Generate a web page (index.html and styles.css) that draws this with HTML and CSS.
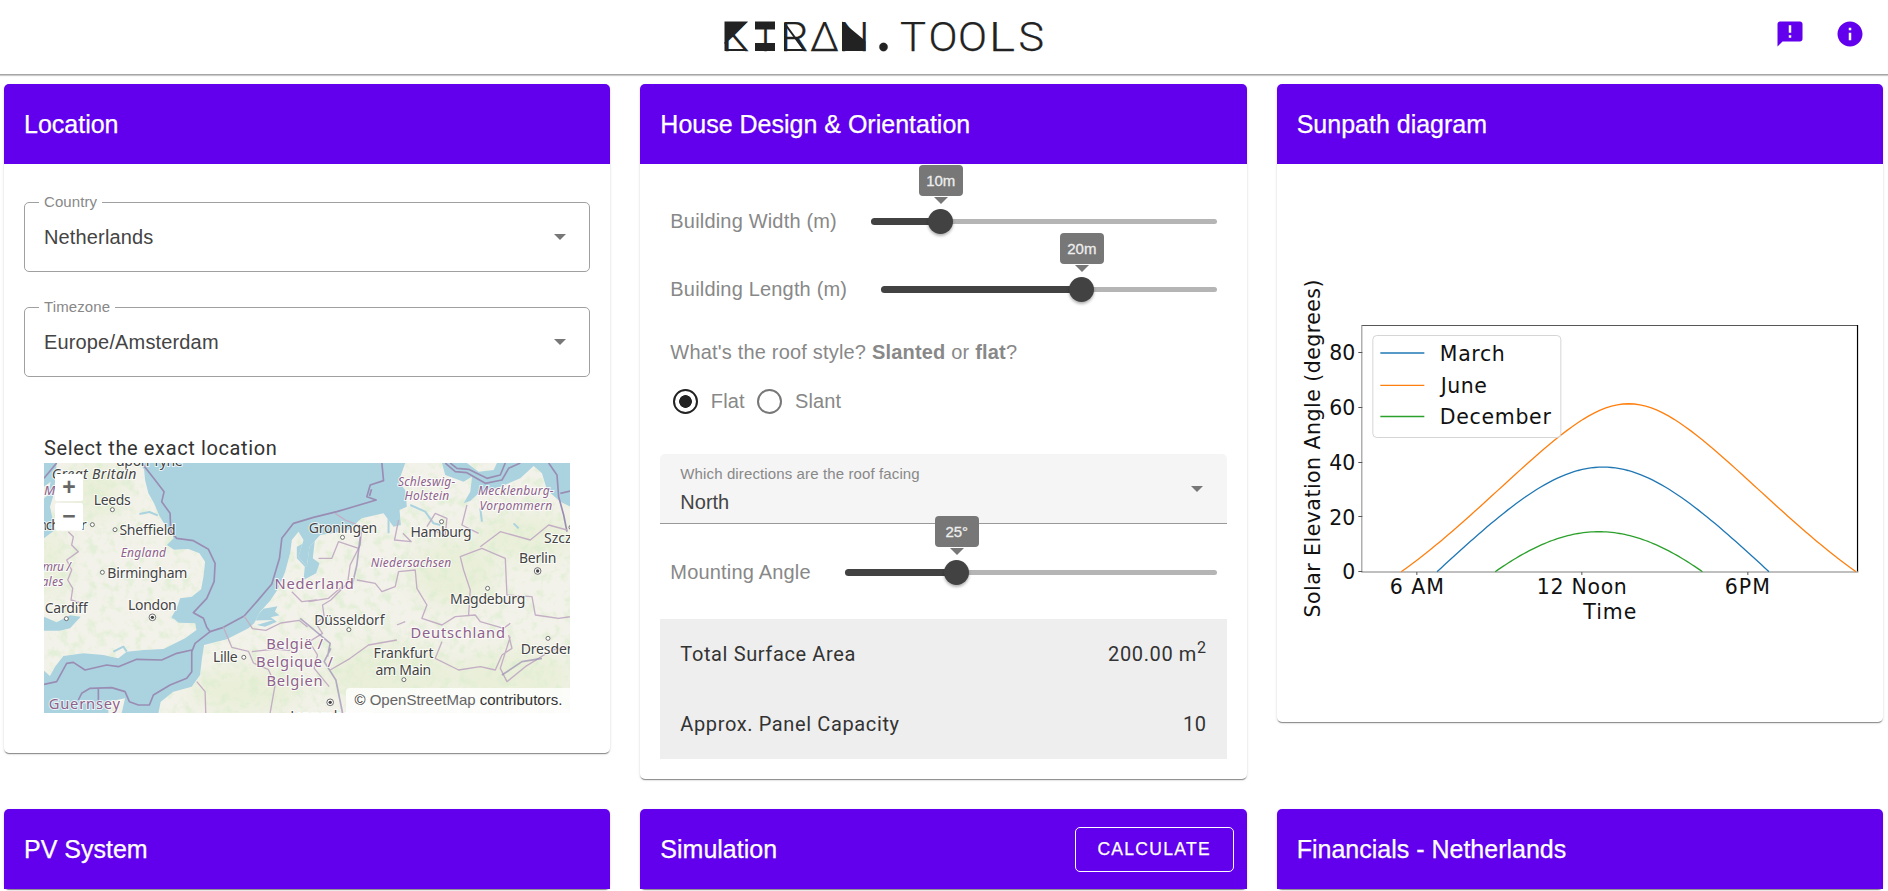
FILE: index.html
```html
<!DOCTYPE html>
<html lang="en">
<head>
<meta charset="utf-8">
<title>Kiran.Tools</title>
<link rel="stylesheet" href="styles.css">
</head>
<body>
<header class="topbar">
  <svg class="logo" viewBox="720 14 330 44" aria-label="KIRAN.TOOLS">
    <g class="logo-text">
      <text x="722" y="50.5" textLength="27" lengthAdjust="spacingAndGlyphs">K</text>
      <text x="760" y="50.5">I</text>
      <text x="780.500" y="50.5" textLength="28" lengthAdjust="spacingAndGlyphs">R</text>
      <text x="810" y="50.5" textLength="29" lengthAdjust="spacingAndGlyphs">Δ</text>
      <text x="838.5" y="50.5" textLength="31" lengthAdjust="spacingAndGlyphs">N</text>
      <circle cx="883.5" cy="47" r="4.2"/>
      <text x="900" y="50.5" textLength="26" lengthAdjust="spacingAndGlyphs">T</text>
      <text x="928.5" y="50.5" textLength="29" lengthAdjust="spacingAndGlyphs">O</text>
      <text x="958" y="50.5" textLength="29" lengthAdjust="spacingAndGlyphs">O</text>
      <text x="989" y="50.5" textLength="26" lengthAdjust="spacingAndGlyphs">L</text>
      <text x="1018.500" y="50.5" textLength="25.500" lengthAdjust="spacingAndGlyphs">S</text>
    </g>
    <path d="M724.5 21.5H748L724.5 44ZM755 21.5h20v8h-20ZM755 43h20v8h-20ZM842 21.5L865.5 41V51H842Z"/>
    <path class="logo-line" d="M725.5 42V50H746M785 23V50H804L785 24"/>
  </svg>
  <nav class="actions">
    <svg viewBox="0 0 24 24"><path d="M20 2H4c-1.100 0-1.990.9-1.990 2L2 22l4-4h14c1.100 0 2-.9 2-2V4c0-1.100-.9-2-2-2zm-7 9h-2V5h2v6zm0 4h-2v-2h2v2z"/></svg>
    <svg viewBox="0 0 24 24"><path d="M12 2C6.480 2 2 6.480 2 12s4.480 10 10 10 10-4.480 10-10S17.520 2 12 2zm1 15h-2v-6h2v6zm0-8h-2V7h2v2z"/></svg>
  </nav>
</header>
<main class="grid">
  <section class="card">
    <h2 class="card-head">Location</h2>
    <div class="location">
      <div class="outlined"><span class="notch">Country</span><span>Netherlands</span><i class="caret"></i></div>
      <div class="outlined"><span class="notch">Timezone</span><span>Europe/Amsterdam</span><i class="caret"></i></div>
      <div class="map-block">
        <p class="map-title">Select the exact location</p>
        <div class="map">
          <svg class="map-art" viewBox="42 99 1578 750" preserveAspectRatio="none">
            <defs>
              <clipPath id="land">
                <path d="M80 99H325L342 118 345 150 355 190 372 220 388 258 405 285 424 303 430 325 410 345 432 359 475 357 508 370 525 395 520 440 513 478 485 500 450 505 440 535 425 560 445 578 495 580 499 600 465 625 400 657 340 660 290 665 265 685 220 675 160 670 100 678 75 710 60 738 42 722V602L90 602 120 595 152 560 120 556 80 577 42 560V325L75 300 60 230 72 190Z"/>
                <path d="M385 849L392 815 430 785 485 770 510 735 515 690 522 645 590 628 655 595 672 580 690 545 720 512 745 475 765 425 780 370 785 330 805 305 820 330 805 380 830 410 838 350 870 315 950 303 995 265 1060 250 1090 290 1112 285 1108 240 1130 230 1125 180 1105 155 1125 99H1235L1245 135 1300 155 1325 140 1320 185 1300 220 1320 213 1350 185 1400 175 1470 145 1510 108 1535 130 1550 180 1590 215 1620 230V849Z"/>
                <path d="M1310 99L1345 125 1390 120 1400 99ZM235 815l50-10-10 44h-40zM42 170l20-15-8 40-12 10z"/>
              </clipPath>
              <filter id="grain" x="0" y="0" width="100%" height="100%">
                <feTurbulence type="fractalNoise" baseFrequency=".035" numOctaves="4" seed="8"/>
                <feColorMatrix values="0 0 0 0 .71  0 0 0 0 .85  0 0 0 0 .62  0 4 0 0 -1.95"/>
              </filter>
              <filter id="soft"><feGaussianBlur stdDeviation="28"/></filter>
            </defs>
            <rect x="42" y="99" width="1578" height="750" fill="#aad3df"/>
            <g clip-path="url(#land)">
              <rect x="42" y="99" width="1578" height="750" fill="#f3f2ea"/>
              <g filter="url(#soft)" fill="#e0ecc8" opacity=".5">
                <ellipse cx="200" cy="180" rx="80" ry="90"/><ellipse cx="60" cy="400" rx="50" ry="100"/>
                <ellipse cx="650" cy="780" rx="170" ry="70"/><ellipse cx="1080" cy="730" rx="200" ry="90"/>
                <ellipse cx="1270" cy="430" rx="130" ry="100"/><ellipse cx="1490" cy="320" rx="150" ry="70"/><ellipse cx="1450" cy="740" rx="180" ry="80"/>
              </g>
              <rect x="42" y="99" width="1578" height="750" filter="url(#grain)" opacity=".6"/>
              <path fill="#aad3df" d="M800 350L855 322 848 385 868 400 858 430 820 450 824 410 800 385ZM665 572L700 536 742 529 734 545 748 556 722 562 740 575 705 590 680 585 730 570Z"/>
              <path class="river" d="M328 252l30-6 25 10M425 562l30 8 35-2M250 665l30-15 10 15M1140 225l45 20 25 35 20 5M1450 280l15 15M1350 235l5 40M1075 260v50"/>
            </g>
            <g class="border-sea">
              <path d="M335 99L375 150 402 185 395 215 420 250 422 305 440 325 490 332 535 358 555 400 552 455 530 505 490 548 520 565 530 592 540 605 580 592 642 558 680 515 725 462 748 385 755 325 790 280 850 262 920 245 1038 210 1010 200 1020 165 1060 152 1055 99"/>
              <path d="M42 763L80 755 110 700 130 697 165 720 230 705 265 710 320 688 395 690 440 670 485 660 485 725 470 745 420 765 370 795 358 825 325 825 298 815 285 785 245 773 180 775 155 790 145 810M205 775v40M485 665L495 640 540 605M42 145L80 99M1018 198l6-20"/>
              <path d="M1245 99L1275 125 1310 128 1365 160 1415 150 1435 115 1470 99M1260 99L1280 115 1315 118 1370 145 1410 135 1425 99M1555 99L1580 135 1585 200 1600 255 1610 305M1590 190L1620 183"/>
            </g>
            <g class="border">
              <path d="M115 305l15 15-5 25 20 20-35 25 15 30-12 30 15 25-5 35 35 10M915 250l30 20 50 20-5 55-30 60-8 55-50 50-25 15 5 35-25 20 20 30-40 25 25 40-10 40 45 55M580 592l25 60 50 12 15 35 45 20 20 45-15 85M642 558l25 38 40 5 45-22 55-8 25 20M665 665l70-8 50 5M500 755l25 30 2 64M785 485l30 30 45-5M900 720l60-35 55-40 85-15"/>
              <path d="M835 515l60-10 40-35M865 385l40 0 20-50 60 20M1105 270l-12 60 50 5-25-25M980 450l55 10 20 25 40-15 10-45 50-5 5 55 30 50-15 40 60 20 40-25 60-5 15 20 70 20 20-15M1315 555l5-75-20-60-10-40 65-25 70 30 5 110 75 5 10 55 70 10 105-15M1350 350l60-45 90 25 55-45 55 15M1310 225l-15 60 50 25M1235 635l-20 50 70 35 65-10 45 10 20-45 30-20-10-40M1440 620l-30 95 20 40 55-45 80-50 55-10M1100 585l25-10M1190 290l25-40 35 15-5 50-40-15"/>
            </g>
            <path class="border-sea" opacity=".7" d="M965 470l15-65 10-85M810 565l30 25 60 50-8 40M902 655l-20 40 35 55 20 99M1415 735l60-40 60-10"/>
            <g class="label">
              <text x="258" y="107" textLength="200">upon Tyne</text>
              <text class="it" x="65" y="147" textLength="254">Great Britain</text>
              <text x="191" y="225" textLength="111">Leeds</text>
              <text x="-28" y="299" textLength="198">Manchester</text>
              <text x="268" y="315" textLength="169">Sheffield</text>
              <text x="232" y="443" textLength="240">Birmingham</text>
              <text x="294" y="539" textLength="146">London</text>
              <text x="44" y="550" textLength="129">Cardiff</text>
              <text x="549" y="696" textLength="74">Lille</text>
              <text x="836" y="308" textLength="205">Groningen</text>
              <text x="1141" y="322" textLength="183">Hamburg</text>
              <text x="1466" y="400" textLength="112">Berlin</text>
              <text x="1541" y="339">Szczecin</text>
              <text x="1259" y="523" textLength="226">Magdeburg</text>
              <text x="852" y="586" textLength="211">Düsseldorf</text>
              <text x="1030" y="685" textLength="180">Frankfurt</text>
              <text x="1036" y="736" textLength="167">am Main</text>
              <text x="1471" y="672" textLength="164">Dresden</text>
              <text x="780" y="872" textLength="250">Luxembourg</text>
            </g>
            <g class="label region">
              <text class="it" x="42" y="195" font-size="40">Man</text>
              <text class="it" x="272" y="380" textLength="136">England</text>
              <text class="it" x="2" y="422" textLength="120">Cymru /</text>
              <text class="it" x="4" y="467" textLength="96">Wales</text>
              <text class="it" x="1103" y="168" textLength="172">Schleswig-</text>
              <text class="it" x="1123" y="211" textLength="134">Holstein</text>
              <text class="it" x="1343" y="195" textLength="227">Mecklenburg-</text>
              <text class="it" x="1348" y="240" textLength="218">Vorpommern</text>
              <text class="it" x="1022" y="412" textLength="241">Niedersachsen</text>
              <text class="big" x="733" y="476" textLength="238">Nederland</text>
              <text class="big" x="1141" y="623" textLength="283">Deutschland</text>
              <text class="big" x="708" y="656" textLength="170">België /</text>
              <text class="big" x="678" y="712" textLength="230">Belgique /</text>
              <text class="big" x="709" y="768" textLength="168">Belgien</text>
              <text class="big" x="56" y="838" textLength="214">Guernsey</text>
            </g>
            <g class="town">
              <circle cx="247" cy="239" r="6"/><circle cx="187" cy="284" r="6"/><circle cx="255" cy="299" r="6"/><circle cx="217" cy="427" r="6"/><circle cx="109" cy="566" r="6"/><circle cx="641" cy="682" r="6"/>
              <circle cx="937" cy="322" r="6"/><circle cx="1234" cy="275" r="6"/><circle cx="1372" cy="475" r="6"/><circle cx="956" cy="599" r="6"/><circle cx="1121" cy="749" r="6"/><circle cx="1553" cy="625" r="6"/><circle cx="1622" cy="292" r="6"/>
              <circle cx="367" cy="562" r="10"/><circle cx="1522" cy="423" r="10"/><circle cx="900" cy="817" r="10"/>
            </g>
            <g fill="#444"><circle cx="367" cy="562" r="5"/><circle cx="1522" cy="423" r="5"/><circle cx="900" cy="817" r="5"/></g>
          </svg>
          <div class="zoom"><span>+</span><span>−</span></div>
          <div class="credit">© <a>OpenStreetMap</a> contributors.</div>
        </div>
      </div>
    </div>
  </section>

  <section class="card">
    <h2 class="card-head">House Design &amp; Orientation</h2>
    <div class="design">
      <div class="slider-row first"><label>Building Width (m)</label>
        <div class="slider"><div class="fill" style="width:20.100%"></div><div class="thumb" style="left:20.100%"><b>10m</b></div></div></div>
      <div class="slider-row second"><label>Building Length (m)</label>
        <div class="slider"><div class="fill" style="width:59.800%"></div><div class="thumb" style="left:59.800%"><b>20m</b></div></div></div>
      <p class="question">What's the roof style? <strong>Slanted</strong> or <strong>flat</strong>?</p>
      <div class="radios"><i class="radio on"></i><span>Flat</span><i class="radio"></i><span>Slant</span></div>
      <div class="filled"><small>Which directions are the roof facing</small><span>North</span><i class="caret"></i></div>
      <div class="slider-row third"><label>Mounting Angle</label>
        <div class="slider"><div class="fill" style="width:30%"></div><div class="thumb" style="left:30%"><b>25°</b></div></div></div>
      <dl class="totals">
        <div><dt>Total Surface Area</dt><dd>200.00 m<sup>2</sup></dd></div>
        <div><dt>Approx. Panel Capacity</dt><dd>10</dd></div>
      </dl>
    </div>
  </section>

  <section class="card">
    <h2 class="card-head">Sunpath diagram</h2>
    <svg class="chart" viewBox="1276.67 164 606.33 558">
      <path stroke="#555" d="M1361.500 325.500H1857.500"/>
      <path stroke="#888" d="M1361.500 325V572"/>
      <path stroke="#000" stroke-width="1.200" d="M1857.200 325V572"/>
      <path stroke="#aaa" stroke-width="1.500" d="M1361 572H1858"/>
      <path stroke="#555" d="M1358 352.500h4M1358 407.500h4M1358 462.500h4M1358 516.500h4M1358 571.500h4M1416.500 572v3M1581.500 572v3M1747.500 572v3"/>
      <g id="curves"></g>
      <rect x="1372.500" y="335.500" width="188" height="102" rx="4" fill="#fff" fill-opacity=".8" stroke="#d5d5d5"/>
      <path stroke="#1f77b4" stroke-width="1.300" d="M1380 353h44"/>
      <path stroke="#ff7f0e" stroke-width="1.300" d="M1380 385.300h44"/>
      <path stroke="#2ca02c" stroke-width="1.300" d="M1380 416.500h44"/>
      <g class="chart-text">
        <text x="1439.500" y="361" textLength="65">March</text>
        <text x="1440.500" y="393" textLength="46">June</text>
        <text x="1439.500" y="423.700" textLength="111">December</text>
        <g text-anchor="end"><text x="1355" y="360.500">80</text><text x="1355" y="415.300">60</text><text x="1355" y="470">40</text><text x="1355" y="524.700">20</text><text x="1355" y="579.300">0</text></g>
        <text x="1389.500" y="594.500" textLength="54">6 AM</text>
        <text x="1536.500" y="594.500" textLength="90">12 Noon</text>
        <text x="1724.500" y="594.500" textLength="45">6PM</text>
        <text x="1583" y="618.700" textLength="53">Time</text>
        <text transform="translate(1319.300 617.500) rotate(-90)" textLength="338">Solar Elevation Angle (degrees)</text>
      </g>
    </svg>
  </section>

  <section class="card"><h2 class="card-head">PV System</h2></section>
  <section class="card"><h2 class="card-head">Simulation<button class="calc">CALCULATE</button></h2></section>
  <section class="card"><h2 class="card-head">Financials - Netherlands</h2></section>
</main>
<script src="chart.js"></script>
</body>
</html>
```
FILE: styles.css
```css
* { box-sizing: border-box; }
html, body { margin: 0; height: 891px; overflow: hidden; background: #fff; }
body { font-family: "Liberation Sans", Arial, sans-serif; font-size: 20px; color: #444; }
p, h2, dl, dd { margin: 0; }
.topbar { height: 75px; padding: 0 8px; display: grid; grid-template-columns: 712px 1fr auto; border-bottom: 1px solid #a6a6a6; box-shadow: 0 1px 1px rgba(0,0,0,.2); }
.logo { grid-column: 2; width: 330px; height: 44px; margin-top: 14px; fill: #222; overflow: visible; }
.logo-text { font: 300 41px Roboto, sans-serif; stroke: #222; stroke-width: .25; }
.logo-line { fill: none; stroke: #222; stroke-width: 2; }
.actions { display: flex; height: 67px; align-items: center; gap: 30px; padding: 0 15px; }
.actions svg { width: 30px; height: 30px; fill: #6200ee; }
.grid { display: grid; grid-template-columns: repeat(3, minmax(0, 1fr)); gap: 30px; padding: 9px 5px 0 4px; align-items: start; }
.card { background: #fff; border-radius: 5px; box-shadow: 0 2px 1px -1px rgba(0,0,0,.3), 0 1px 1px rgba(0,0,0,.16), 0 1px 3px rgba(0,0,0,.12); }
.card-head { height: 80px; padding: 0 13px 0 20px; display: flex; align-items: center; justify-content: space-between; background: #6200ee; color: #fff; border-radius: 5px 5px 0 0; font-size: 25px; font-weight: 400; -webkit-text-stroke: .25px #fff; }
.calc { width: 159px; height: 45px; padding: 0; border: 1px solid #fff; border-radius: 5px; background: none; color: #fff; font: 400 17.5px "Liberation Sans", Arial, sans-serif; letter-spacing: 1.3px; }

.location { height: 589px; padding: 38px 20px 0; }
.outlined { position: relative; height: 70px; margin-bottom: 35px; padding: 0 19px; border: 1px solid #a0a0a0; border-radius: 5px; display: flex; align-items: center; justify-content: space-between; letter-spacing: .15px; }
.notch { position: absolute; left: 14px; top: -10px; padding: 0 5px; background: #fff; font-size: 15px; line-height: 18px; color: #888; letter-spacing: .1px; }
.caret { width: 0; height: 0; margin-right: 4px; border: 6px solid transparent; border-top-color: #777; border-bottom: 0; }
.map-block { padding: 21px 20px 0; }
.map-title { font: 20px/30px Roboto, sans-serif; letter-spacing: .62px; color: #333; }
.map { position: relative; height: 250px; overflow: hidden; }
.map-art { display: block; width: 100%; height: 250px; }
.border, .border-sea, .river { fill: none; stroke-linejoin: round; }
.border { stroke: #c3aec4; stroke-width: 4; }
.border-sea { stroke: #9a8db4; stroke-width: 5; }
.river { stroke: #aad3df; stroke-width: 6; }
.label { font: 42px "Noto Sans", sans-serif; fill: #444; stroke: #fff; stroke-opacity: .75; stroke-width: 6; paint-order: stroke; }
.label .it { font-style: italic; }
.label.region { font-size: 36px; fill: #8d618b; }
.label.region .big { font-size: 44px; }
.town { fill: #fff; stroke: #555; stroke-width: 2.5; }
.zoom { position: absolute; left: 11px; top: 11px; display: grid; gap: 2px; }
.zoom span { width: 28px; height: 27px; border-radius: 2px; background: #fff; color: #666; font-size: 23px; font-weight: 700; line-height: 27px; text-align: center; }
.credit { position: absolute; right: 0; bottom: 0; height: 25px; padding: 0 8px; border-radius: 4px 0 0; background: rgba(255,255,255,.8); color: #333; font-size: 15px; line-height: 24px; }
.credit a { color: #666; }

.design { height: 615px; padding: 0 20px; display: flex; flex-direction: column; color: #888; }
.slider-row { display: flex; align-items: center; height: 30px; flex: none; padding: 0 10px; }
.slider-row label { letter-spacing: .18px; white-space: nowrap; }
.slider { flex: 1; position: relative; height: 5px; border-radius: 3px; background: #b5b5b5; }
.first { margin-top: 42px; }
.second { margin-top: 38px; }
.first label { width: 201px; }
.second label { width: 211px; }
.third label { width: 175px; }
.fill { height: 7px; margin-top: -1px; border-radius: 4px; background: #424242; }
.thumb { position: absolute; top: -10px; width: 25px; height: 25px; margin-left: -12.5px; border-radius: 50%; background: #424242; box-shadow: 0 2px 3px rgba(0,0,0,.3); }
.thumb b { position: absolute; left: -9.5px; top: -44px; width: 44px; height: 31px; border-radius: 4px; background: #777; color: #eee; font: 400 15px/31px "Liberation Sans", Arial, sans-serif; -webkit-text-stroke: .3px #eee; text-align: center; }
.thumb b::after { content: ""; position: absolute; left: 15px; top: 32px; border: 7px solid transparent; border-top-color: #777; border-bottom: 0; }
.question { margin: 36px 10px 0; line-height: 24px; letter-spacing: .19px; }
.radios { display: flex; align-items: center; height: 30px; margin: 22px 0 38px 12.5px; letter-spacing: .1px; }
.radio { width: 25px; height: 25px; border: 2px solid #777; border-radius: 50%; margin-right: 13px; }
.radio.on { border-color: #222; background: radial-gradient(circle, #222 6px, transparent 6.7px); }
.radios span { margin-right: 12.5px; }
.filled { position: relative; flex: none; height: 70px; padding: 11px 20px 0; display: flex; flex-direction: column; background: #f5f5f5; border-bottom: 1px solid #999; border-radius: 5px 5px 0 0; color: #444; }
.filled small { font-size: 15px; line-height: 18px; color: #888; letter-spacing: .12px; }
.filled span { line-height: 24px; margin-top: 7px; }
.filled .caret { position: absolute; right: 20px; top: 32px; }
.third { margin-top: 33px; }
.totals { height: 140px; margin-top: 32px; background: #eee; color: #333; font: 20px Roboto, sans-serif; letter-spacing: .62px; }
.totals div { height: 70px; padding: 0 20px; display: flex; align-items: center; justify-content: space-between; }
.totals sup { font-size: 16px; line-height: 0; }

.chart { display: block; width: 100%; height: 558px; fill: none; }
.chart-text { font: 20.5px "DejaVu Sans", sans-serif; fill: #111; }
```
FILE: chart.js
```js
// Solar elevation over one day for latitude 52.1°N, drawn for three declinations.
const rad = Math.PI / 180, lat = 52.1 * rad;
const seasons = [
  { color: "#1f77b4", tilt: 0.3, noon: 1602.7 },
  { color: "#ff7f0e", tilt: 23.44, noon: 1628.3 },
  { color: "#2ca02c", tilt: -23.3, noon: 1598.5 }
];
const group = document.getElementById("curves");
for (const s of seasons) {
  const d = s.tilt * rad, pts = [];
  const half = Math.acos(-Math.tan(lat) * Math.tan(d));
  for (let i = 0; i <= 80; i++) {
    const h = -half + (2 * half * i) / 80;
    const el = Math.asin(Math.sin(lat) * Math.sin(d) + Math.cos(lat) * Math.cos(d) * Math.cos(h)) / rad;
    pts.push((s.noon + (h / rad / 15) * 27.55).toFixed(2) + "," + (571.7 - el * 2.738).toFixed(2));
  }
  const line = document.createElementNS("http://www.w3.org/2000/svg", "polyline");
  line.setAttribute("points", pts.join(" "));
  line.setAttribute("stroke", s.color);
  line.setAttribute("stroke-width", "1.3");
  group.appendChild(line);
}
```
